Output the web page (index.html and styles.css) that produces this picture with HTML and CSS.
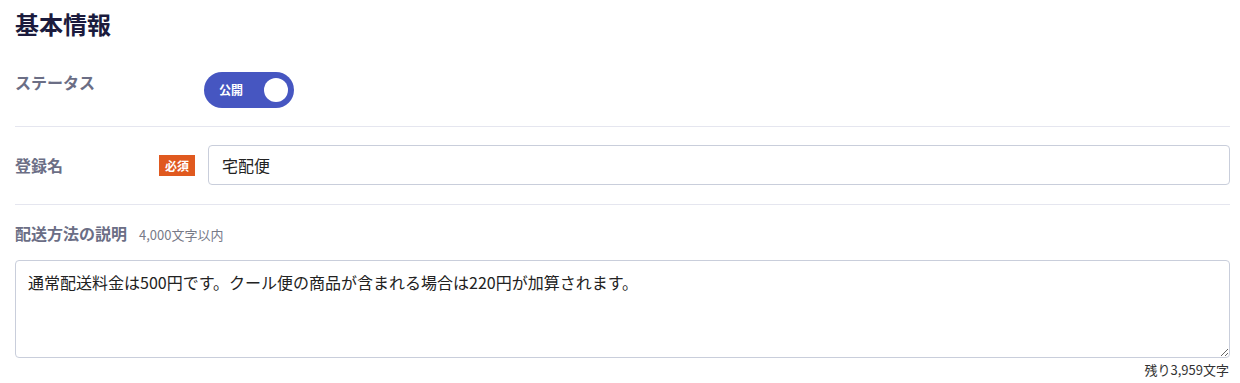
FILE: index.html
```html
<!DOCTYPE html>
<html lang="ja">
<head>
<meta charset="utf-8">
<title>基本情報</title>
<link rel="stylesheet" href="styles.css">
</head>
<body>
<div class="page">
  <h1 class="title">基本情報</h1>

  <div class="row row-status">
    <div class="label-col label-col-status">
      <span class="label">ステータス</span>
    </div>
    <div class="toggle">
      <span class="toggle-text">公開</span>
      <span class="knob"></span>
    </div>
  </div>

  <div class="row row-name">
    <div class="label-col label-col-name">
      <span class="label">登録名</span>
      <span class="badge">必須</span>
    </div>
    <input class="text-input" type="text" value="宅配便">
  </div>

  <div class="section-desc">
    <div class="desc-head">
      <span class="label">配送方法の説明</span>
      <span class="hint">4,000文字以内</span>
    </div>
    <textarea class="textarea">通常配送料金は500円です。クール便の商品が含まれる場合は220円が加算されます。</textarea>
    <div class="counter">残り3,959文字</div>
  </div>
</div>
</body>
</html>
```

FILE: styles.css
```css
* { box-sizing: border-box; }

html, body {
  margin: 0;
  padding: 0;
  background: #ffffff;
}

body {
  font-family: "Noto Sans CJK JP", "Noto Sans", sans-serif;
  color: #222222;
}

.page {
  padding: 6px 10px 0 15px;
}

.title {
  margin: 0;
  font-size: 24px;
  line-height: 36px;
  font-weight: 700;
  color: #1b1b3d;
}

.row {
  display: flex;
  border-bottom: 1px solid #e5e6ef;
}

.row-status {
  margin-top: 28px;
  padding-bottom: 18px;
  align-items: flex-start;
}

.row-name {
  padding: 18px 0 19px;
  align-items: center;
}

.label {
  font-size: 16px;
  line-height: 24px;
  font-weight: 700;
  color: #6b6e85;
}

.label-col-status {
  width: 189px;
  flex: none;
}

.label-col-name {
  width: 193px;
  flex: none;
  display: flex;
  align-items: center;
  justify-content: space-between;
  padding-right: 13px;
}

.toggle {
  margin-top: 2px;
  width: 90px;
  height: 36px;
  border-radius: 18px;
  background: #4656c1;
  display: flex;
  align-items: center;
  justify-content: space-between;
  padding: 0 6px 0 15px;
}

.toggle-text {
  color: #ffffff;
  font-size: 12px;
  font-weight: 700;
  line-height: 16px;
}

.knob {
  width: 24px;
  height: 24px;
  border-radius: 50%;
  background: #ffffff;
}

.badge {
  display: inline-block;
  width: 36px;
  height: 21px;
  background: #e0591f;
  color: #ffffff;
  font-size: 12px;
  font-weight: 700;
  line-height: 21px;
  text-align: center;
}

.text-input {
  flex: 1;
  height: 40px;
  border: 1px solid #c9cedb;
  border-radius: 4px;
  padding: 0 13px;
  font-family: "Noto Sans CJK JP", "Noto Sans", sans-serif;
  font-size: 16px;
  color: #222222;
  background: #ffffff;
  outline: none;
}

.section-desc {
  padding-top: 16px;
}

.desc-head {
  display: flex;
  align-items: baseline;
}

.hint {
  margin-left: 12px;
  font-size: 13px;
  color: #777a88;
}

.textarea {
  display: block;
  width: 100%;
  height: 98px;
  margin-top: 15px;
  border: 1px solid #c9cedb;
  border-radius: 4px;
  padding: 10px 12px;
  font-family: "Noto Sans CJK JP", "Noto Sans", sans-serif;
  font-size: 16px;
  line-height: 22px;
  color: #222222;
  resize: vertical;
  outline: none;
  background: #ffffff;
}

.counter {
  margin-top: 3px;
  text-align: right;
  font-size: 13px;
  line-height: 18px;
  color: #333333;
  padding-right: 1px;
}
```
